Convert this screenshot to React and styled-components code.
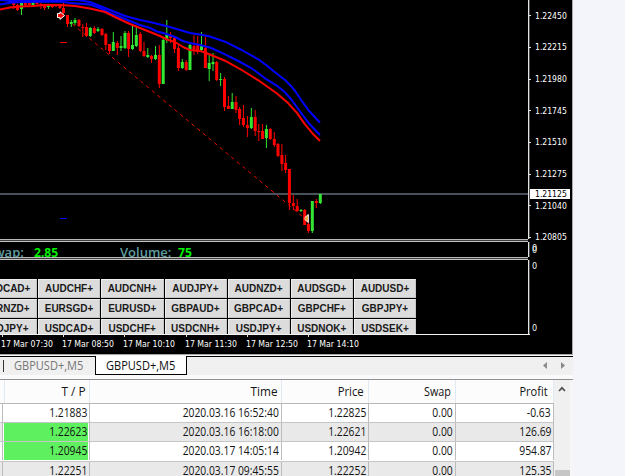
import styled, { createGlobalStyle } from "styled-components";

const GlobalStyle = createGlobalStyle`
  body {
    margin: 0;
    background: #f3f5fa;
    overflow: hidden;
  }
`;

const UP = "#32e632";
const DOWN = "#ff0000";

// [x, high, low, bodyTop, bodyBottom, color]
const candles = [
  [10.3, 0, 3, 1, 2, UP],
  [13.7, 0, 9, 0, 5, DOWN],
  [17.5, 4, 11, 5, 10, DOWN],
  [21.5, 0, 15, 3, 9, UP],
  [25.3, 2, 6, 3, 5, DOWN],
  [29.3, 2, 6, 3, 5, DOWN],
  [33, 0, 7, 0, 5, UP],
  [37, 0, 5, 1, 4, DOWN],
  [41, 1, 9, 4, 6, DOWN],
  [44.6, 4, 10, 5, 8, DOWN],
  [48.4, 5, 9, 6, 7, UP],
  [52.3, 5, 8, 6, 7, DOWN],
  [56, 4, 7, 5, 6, DOWN],
  [60, 4, 9, 5, 8, DOWN],
  [63.5, 3, 14, 8, 13, DOWN],
  [67.5, 15, 27, 15, 24, DOWN],
  [71.3, 20, 27, 22, 24, UP],
  [75, 18, 25, 20, 23, UP],
  [79, 19, 27, 20, 26, DOWN],
  [82.8, 24, 37, 27, 28, DOWN],
  [86.5, 23, 37, 27, 36, DOWN],
  [90.3, 27, 37, 28, 36, UP],
  [94.3, 26, 34, 28, 33, DOWN],
  [98, 27, 32, 29, 31, UP],
  [102, 28, 36, 29, 35, DOWN],
  [105.8, 33, 50, 34, 45, DOWN],
  [109.5, 44, 54, 44, 51, DOWN],
  [113.3, 32, 51, 42, 51, UP],
  [117.3, 41, 55, 43, 48, DOWN],
  [121, 36, 51, 46, 48, UP],
  [125, 31, 49, 33, 48, UP],
  [128.6, 31, 57, 33, 49, DOWN],
  [132.5, 26, 50, 45, 49, UP],
  [136.3, 27, 47, 35, 46, UP],
  [140.3, 32, 52, 34, 51, DOWN],
  [144, 42, 57, 51, 56, DOWN],
  [147.8, 48, 58, 55, 57, UP],
  [151.5, 55, 63, 56, 59, DOWN],
  [155.5, 46, 60, 55, 59, UP],
  [159.3, 45, 88, 55, 84, DOWN],
  [163.2, 37, 84, 40, 84, UP],
  [166.8, 20, 43, 35, 40, UP],
  [170.6, 32, 43, 35, 38, DOWN],
  [174.5, 37, 53, 38, 49, DOWN],
  [178.4, 45, 71, 48, 68, DOWN],
  [182.3, 59, 69, 62, 68, UP],
  [186.2, 60, 71, 62, 70, DOWN],
  [190, 43, 70, 45, 70, UP],
  [194, 35, 55, 46, 50, DOWN],
  [197.7, 36, 54, 45, 52, DOWN],
  [201.5, 32, 51, 45, 50, UP],
  [205.4, 37, 68, 48, 68, DOWN],
  [209.2, 54, 81, 63, 69, UP],
  [213, 53, 71, 62, 64, UP],
  [216.7, 61, 81, 62, 80, DOWN],
  [220.6, 73, 86, 79, 80, UP],
  [224.5, 77, 111, 79, 107, DOWN],
  [228.4, 96, 109, 106, 109, DOWN],
  [232.2, 93, 109, 102, 109, UP],
  [236, 96, 113, 102, 110, DOWN],
  [239.6, 107, 125, 109, 119, DOWN],
  [243.4, 105, 127, 118, 125, DOWN],
  [247.4, 116, 137, 125, 128, DOWN],
  [251.3, 108, 129, 117, 128, UP],
  [255.2, 110, 136, 117, 131, DOWN],
  [258.8, 124, 141, 131, 132, DOWN],
  [262.6, 124, 139, 131, 139, DOWN],
  [266.4, 125, 148, 129, 138, UP],
  [270.3, 128, 140, 129, 139, DOWN],
  [274.3, 132, 147, 139, 145, DOWN],
  [278, 143, 157, 144, 156, DOWN],
  [281.9, 144, 171, 155, 164, DOWN],
  [285.6, 155, 173, 163, 170, DOWN],
  [289.4, 169, 210, 169, 203, DOWN],
  [293.3, 195, 210, 203, 206, DOWN],
  [297.2, 199, 212, 206, 211, DOWN],
  [301, 209, 212, 210, 211, UP],
  [304.7, 209, 225, 210, 225, DOWN],
  [308.4, 222, 233, 224, 231, DOWN],
  [312.3, 201, 233, 201, 231, UP],
  [316.3, 199, 208, 201, 203, DOWN],
  [320.3, 194, 204, 194, 203, UP],
];

const slowLine =
  "0,0 12,1 40,-1 78,0 90,2 100,6 110,10 125,16 140,20 150,22 168,26.5 180,30 190,33 200,34.5 210,36.5 225,41.7 241.7,50 258.3,59.3 266.7,65.5 275,72.3 285,80 291.7,86.7 296.7,93.3 302.3,101.7 308.3,110 320,122.7";
const midLine =
  "0,4.5 12,2.5 25,2 60,1.5 70,3 90,4.5 100,8 110,13 125,19 140,25 150,28 157,31.5 165,33.5 175,37 183,41 190,43 200,45 210,47.5 225,54.3 238.3,61 251.7,68.3 265,78.3 278.3,86.7 285,92.3 291.7,100 298.3,109 308.3,122.7 320,135";
const fastLine =
  "0,9.5 10,7.5 20,6.5 33,6 45,5 60,5 75,6 90,8.5 105,12 115,17 130,24 145,30 160,36 167,39.5 175,42 183,47 190,50 200,51 205,52.5 225,60.7 241.7,70 258.3,80.3 276.7,93.3 288.3,103.3 296.7,112.7 305,124.3 313.3,134.3 320,141";

const prices = [
  "1.22450",
  "1.22215",
  "1.21980",
  "1.21745",
  "1.21510",
  "1.21275",
  "1.21040",
  "1.20805",
];
const times = ["07:30", "08:50", "10:10", "11:30", "12:50", "14:10"];

const pairs = [
  ["AUDCAD+", "AUDCHF+", "AUDCNH+", "AUDJPY+", "AUDNZD+", "AUDSGD+", "AUDUSD+"],
  ["EURNZD+", "EURSGD+", "EURUSD+", "GBPAUD+", "GBPCAD+", "GBPCHF+", "GBPJPY+"],
  ["NZDJPY+", "USDCAD+", "USDCHF+", "USDCNH+", "USDJPY+", "USDNOK+", "USDSEK+"],
];

const orders = [
  { tp: "1.21883", time: "2020.03.16 16:52:40", price: "1.22825", profit: "-0.63", sl: true },
  { tp: "1.22623", time: "2020.03.16 16:18:00", price: "1.22621", profit: "126.69", hit: true },
  { tp: "1.20945", time: "2020.03.17 14:05:14", price: "1.20942", profit: "954.87", hit: true },
  { tp: "1.22251", time: "2020.03.17 09:45:55", price: "1.22252", profit: "125.35" },
];

const Terminal = styled.main`
  display: grid;
  grid-template-rows: 354px 25px 97px;
  width: 573px;
  height: 476px;
  overflow: hidden;
  font-family: "Open Sans", "Noto Sans", sans-serif;
`;

const ChartWindow = styled.section`
  display: grid;
  grid-template-columns: 528px 44px;
  grid-template-rows: 239px 3px 15px 3px 74px 20px;
  background: #000;
  border-right: 1px solid #a8a8a8;
`;

const Plot = styled.svg`
  display: block;
`;

const Splitter = styled.div`
  margin-right: -1px;
  box-sizing: border-box;
  height: 3px;
  background: #3c3c3c;
  border-top: 1px solid #b8b8b8;
  border-bottom: 1px solid #c4c4c4;
`;

const AxisGap = styled.div`
  background: #000;
`;

const Scale = styled.div`
  position: relative;
  display: flex;
  flex-direction: column;
  justify-content: ${(p) => (p.$spread ? "space-between" : "flex-start")};
  border-left: 1px solid #e4e4e4;
  box-shadow: inset 1px 0 #4a4a4a;
`;

const axisText = `
  font-family: "DejaVu Sans Condensed", "DejaVu Sans", sans-serif;
  font-stretch: condensed;
  font-size: 9px;
  white-space: nowrap;
`;

const PriceTick = styled.div`
  ${axisText}
  display: flex;
  align-items: center;
  flex: 0 0 31.66px;
  height: 31.66px;
  color: #fff;
  &::before {
    content: "";
    width: 2px;
    height: 1px;
    margin-right: 3.5px;
    background: #e0e0e0;
  }
`;

const AxisLabel = styled.span`
  display: inline-block;
  transform: scaleX(${(p) => p.$scale || 0.95});
  transform-origin: left;
`;

const CurrentPrice = styled.div`
  ${axisText}
  position: absolute;
  left: 1px;
  top: 189px;
  width: 35.5px;
  height: 10px;
  padding-left: 4.5px;
  line-height: 10px;
  color: #000;
  background: #fff;
`;

const Zero = styled.span`
  ${axisText}
  line-height: 12px;
  padding-left: 3px;
  color: #f0f0f0;
  text-shadow: ${(p) => (p.$doubled ? "0 1.5px #f0f0f0" : "none")};
`;

const StatusStrip = styled.div`
  display: grid;
  grid-template-columns: 34px 86px 58px 1fr;
  overflow: hidden;
  line-height: 21px;
  font-size: 13px;
`;

const StatusLabel = styled.span`
  margin-left: ${(p) => p.$shift || 0}px;
  color: #5f9ea0;
  font-weight: 600;
  white-space: nowrap;
`;

const StatusValue = styled.span`
  color: #00f000;
  font-weight: bold;
  transform: scaleX(0.93);
  transform-origin: left;
`;

const PairPanel = styled.div`
  box-sizing: border-box;
  padding-top: 19px;
  overflow: hidden;
`;

const PairGrid = styled.div`
  display: grid;
  grid-template-columns: repeat(7, 63.2px);
  grid-auto-rows: 20px;
  margin-left: -25px;
`;

const PairButton = styled.button`
  margin: 0 1px 1px 0;
  padding: 0 0.5px 0 0;
  border: 1px solid #c6c6c6;
  border-top-color: #eee;
  border-left-color: #eee;
  background: #dcdcdc;
  color: #1a1a1a;
  font: bold 10px/17px "Liberation Sans", Arial, sans-serif;
`;

const TimeScale = styled.div`
  grid-column: 1 / -1;
  display: grid;
  grid-template-columns: repeat(6, 61.2px);
  padding-left: 1px;
  background: linear-gradient(#f4f4f4, #f4f4f4) 0 0 / 530px 1px no-repeat;
`;

const TimeTick = styled.div`
  ${axisText}
  color: #fff;
  line-height: 14px;
  &::before {
    content: "";
    display: block;
    width: 1px;
    height: 3px;
    margin-left: 1px;
    background: #e0e0e0;
  }
`;

const TabBar = styled.nav`
  display: flex;
  align-items: flex-start;
  box-sizing: border-box;
  height: 25px;
  background: linear-gradient(
    #a8a8a8 0 1px,
    #f8f8f8 1px 2px,
    #000 2px 3px,
    #f0f0f0 3px 21px,
    #fafafa 21px
  );
`;

const Tab = styled.div`
  box-sizing: border-box;
  margin-top: 2px;
  width: ${(p) => (p.$active ? 92 : 95)}px;
  height: 19px;
  padding-left: ${(p) => (p.$active ? 10 : 14)}px;
  line-height: 19px;
  font-size: 12px;
  color: ${(p) => (p.$active ? "#101010" : "#777")};
  background: ${(p) => (p.$active ? "#fff" : "transparent")};
  border: solid #000;
  border-width: ${(p) => (p.$active ? "0 1px 1px 1px" : "0")};
  white-space: nowrap;
`;

const TabText = styled.span`
  display: inline-block;
  transform: scaleX(0.92);
  transform-origin: left;
`;

const TabDivider = styled.i`
  width: 1px;
  height: 12px;
  margin: 6px -4px 0 3px;
  background: #333;
`;

const TabArrows = styled.div`
  display: flex;
  gap: 14px;
  margin: 8px 8px 0 auto;
`;

const OrdersPane = styled.section`
  display: grid;
  grid-template-columns: 554px 16px;
  box-sizing: border-box;
  border-top: 1px solid #8f8f8f;
  background: #f6f6f6;
`;

const Orders = styled.div`
  display: grid;
  grid-template-rows: 24px repeat(4, 19.2px);
  height: 96px;
  overflow: hidden;
`;

const Row = styled.div`
  display: grid;
  grid-template-columns: 3px 87px 192px 87px 87px 98px;
  box-sizing: border-box;
  background: ${(p) => (p.$odd ? "#e9e9e9" : "#fff")};
  border-bottom: 1px solid #c6c6c6;
`;

const HeaderRow = styled(Row)`
  background: #fcfcfc;
  border-bottom-color: #b8b8b8;
`;

const Cell = styled.div`
  box-sizing: border-box;
  height: 18px;
  padding-right: 2px;
  border-right: 1px solid #bcbcbc;
  background: ${(p) => p.$fill || "transparent"};
  box-shadow: ${(p) => (p.$fill ? "inset 1px 0 #fff, inset -1px 0 #fff" : "none")};
  color: #141414;
  font-size: 12px;
  line-height: 17px;
  text-align: right;
  white-space: nowrap;
`;

const HeaderCell = styled(Cell)`
  height: 23px;
  padding-right: ${(p) => p.$pad || 4}px;
  border-right-color: #e0eaf5;
  line-height: 24px;
`;

const CellText = styled.span`
  display: inline-block;
  transform: scaleX(${(p) => p.$scale || 0.86});
  transform-origin: right;
`;

const ScrollBar = styled.div`
  display: flex;
  flex-direction: column;
  justify-content: space-between;
  align-items: center;
  padding-top: 6px;
  background: #f0f0f0;
`;

const ScrollThumb = styled.div`
  width: 15px;
  height: 6px;
  background: #c6c6c6;
`;

const Candle = ({ data: [x, high, low, top, bottom, color] }) => (
  <g fill={color}>
    <rect x={x - 0.5} y={high} width={1} height={low - high} />
    <rect x={x - 1.5} y={top} width={3} height={bottom - top} />
  </g>
);

const PriceChart = () => (
  <Plot width="528" height="239" viewBox="0 0 528 239">
    <rect y="193" width="528" height="2" fill="#46515c" />
    {candles.map((c) => (
      <Candle key={c[0]} data={c} />
    ))}
    <g fill="none" strokeWidth="2" strokeLinejoin="round">
      <polyline points={slowLine} stroke="#0000ff" />
      <polyline points={midLine} stroke="#0000ff" />
      <polyline points={fastLine} stroke="#ff0000" />
    </g>
    <path
      d="M61 14.5L306 219.5"
      stroke="#f00000"
      strokeWidth="1"
      strokeDasharray="3.6 3.8"
      fill="none"
    />
    <path d="M60 42.5h7" stroke="#f00" />
    <path d="M60 218.5h7" stroke="#00f" />
    <path
      d="M57.5 13.5H60V11.8L64.6 15.6L60 19.4V17.6H57.5Z"
      fill="#f00"
      stroke="#fff"
      strokeWidth="1"
    />
    <path d="M308.3 214.5V222.5L303.8 218.5Z" fill="#e89a30" stroke="#fff" />
    <path d="M304 216v6" stroke="#f00" strokeWidth="1" />
  </Plot>
);

const headers = [
  ["T / P", 4, 0.98],
  ["Time", 4, 0.98],
  ["Price", 4, 0.94],
  ["Swap", 4, 0.9],
  ["Profit", 5, 0.92],
];

const App = () => {
  return (
    <>
      <GlobalStyle />
      <Terminal>
        <ChartWindow>
          <PriceChart />
          <Scale>
            {prices.map((price) => (
              <PriceTick key={price}>
                <AxisLabel>{price}</AxisLabel>
              </PriceTick>
            ))}
            <CurrentPrice>
              <AxisLabel>1.21125</AxisLabel>
            </CurrentPrice>
          </Scale>

          <Splitter />
          <AxisGap />

          <StatusStrip>
            <StatusLabel $shift={-6}>wap:</StatusLabel>
            <StatusValue>2.85</StatusValue>
            <StatusLabel>Volume:</StatusLabel>
            <StatusValue>75</StatusValue>
          </StatusStrip>
          <Scale>
            <Zero $doubled>0</Zero>
          </Scale>

          <Splitter />
          <AxisGap />

          <PairPanel>
            <PairGrid>
              {pairs.flat().map((pair) => (
                <PairButton key={pair}>{pair}</PairButton>
              ))}
            </PairGrid>
          </PairPanel>
          <Scale $spread>
            <Zero>0</Zero>
            <Zero>0</Zero>
          </Scale>

          <TimeScale>
            {times.map((time) => (
              <TimeTick key={time}>
                <AxisLabel $scale={0.96}>17 Mar {time}</AxisLabel>
              </TimeTick>
            ))}
          </TimeScale>
        </ChartWindow>

        <TabBar>
          <TabDivider />
          <Tab>
            <TabText>GBPUSD+,M5</TabText>
          </Tab>
          <Tab $active>
            <TabText>GBPUSD+,M5</TabText>
          </Tab>
          <TabArrows>
            <svg width="4" height="7">
              <path d="M4 0v7L0 3.5z" fill="#8a8a8a" />
            </svg>
            <svg width="4" height="7">
              <path d="M0 0v7l4-3.5z" fill="#8a8a8a" />
            </svg>
          </TabArrows>
        </TabBar>

        <OrdersPane>
          <Orders>
            <HeaderRow>
              <HeaderCell />
              {headers.map(([label, pad, scale]) => (
                <HeaderCell key={label} $pad={pad}>
                  <CellText $scale={scale}>{label}</CellText>
                </HeaderCell>
              ))}
            </HeaderRow>
            {orders.map((order, i) => (
              <Row key={order.tp} $odd={i % 2 === 1}>
                <Cell $fill={order.sl && "#ff9090"} />
                <Cell $fill={order.hit && "#5ef05e"}>
                  <CellText>{order.tp}</CellText>
                </Cell>
                <Cell>
                  <CellText>{order.time}</CellText>
                </Cell>
                <Cell>
                  <CellText>{order.price}</CellText>
                </Cell>
                <Cell>
                  <CellText>0.00</CellText>
                </Cell>
                <Cell>
                  <CellText>{order.profit}</CellText>
                </Cell>
              </Row>
            ))}
          </Orders>
          <ScrollBar>
            <svg width="8" height="6">
              <path d="M1 5l3-3.2L7 5" fill="none" stroke="#505050" strokeWidth="1.7" />
            </svg>
            <ScrollThumb />
          </ScrollBar>
        </OrdersPane>
      </Terminal>
    </>
  );
};

export default App;
